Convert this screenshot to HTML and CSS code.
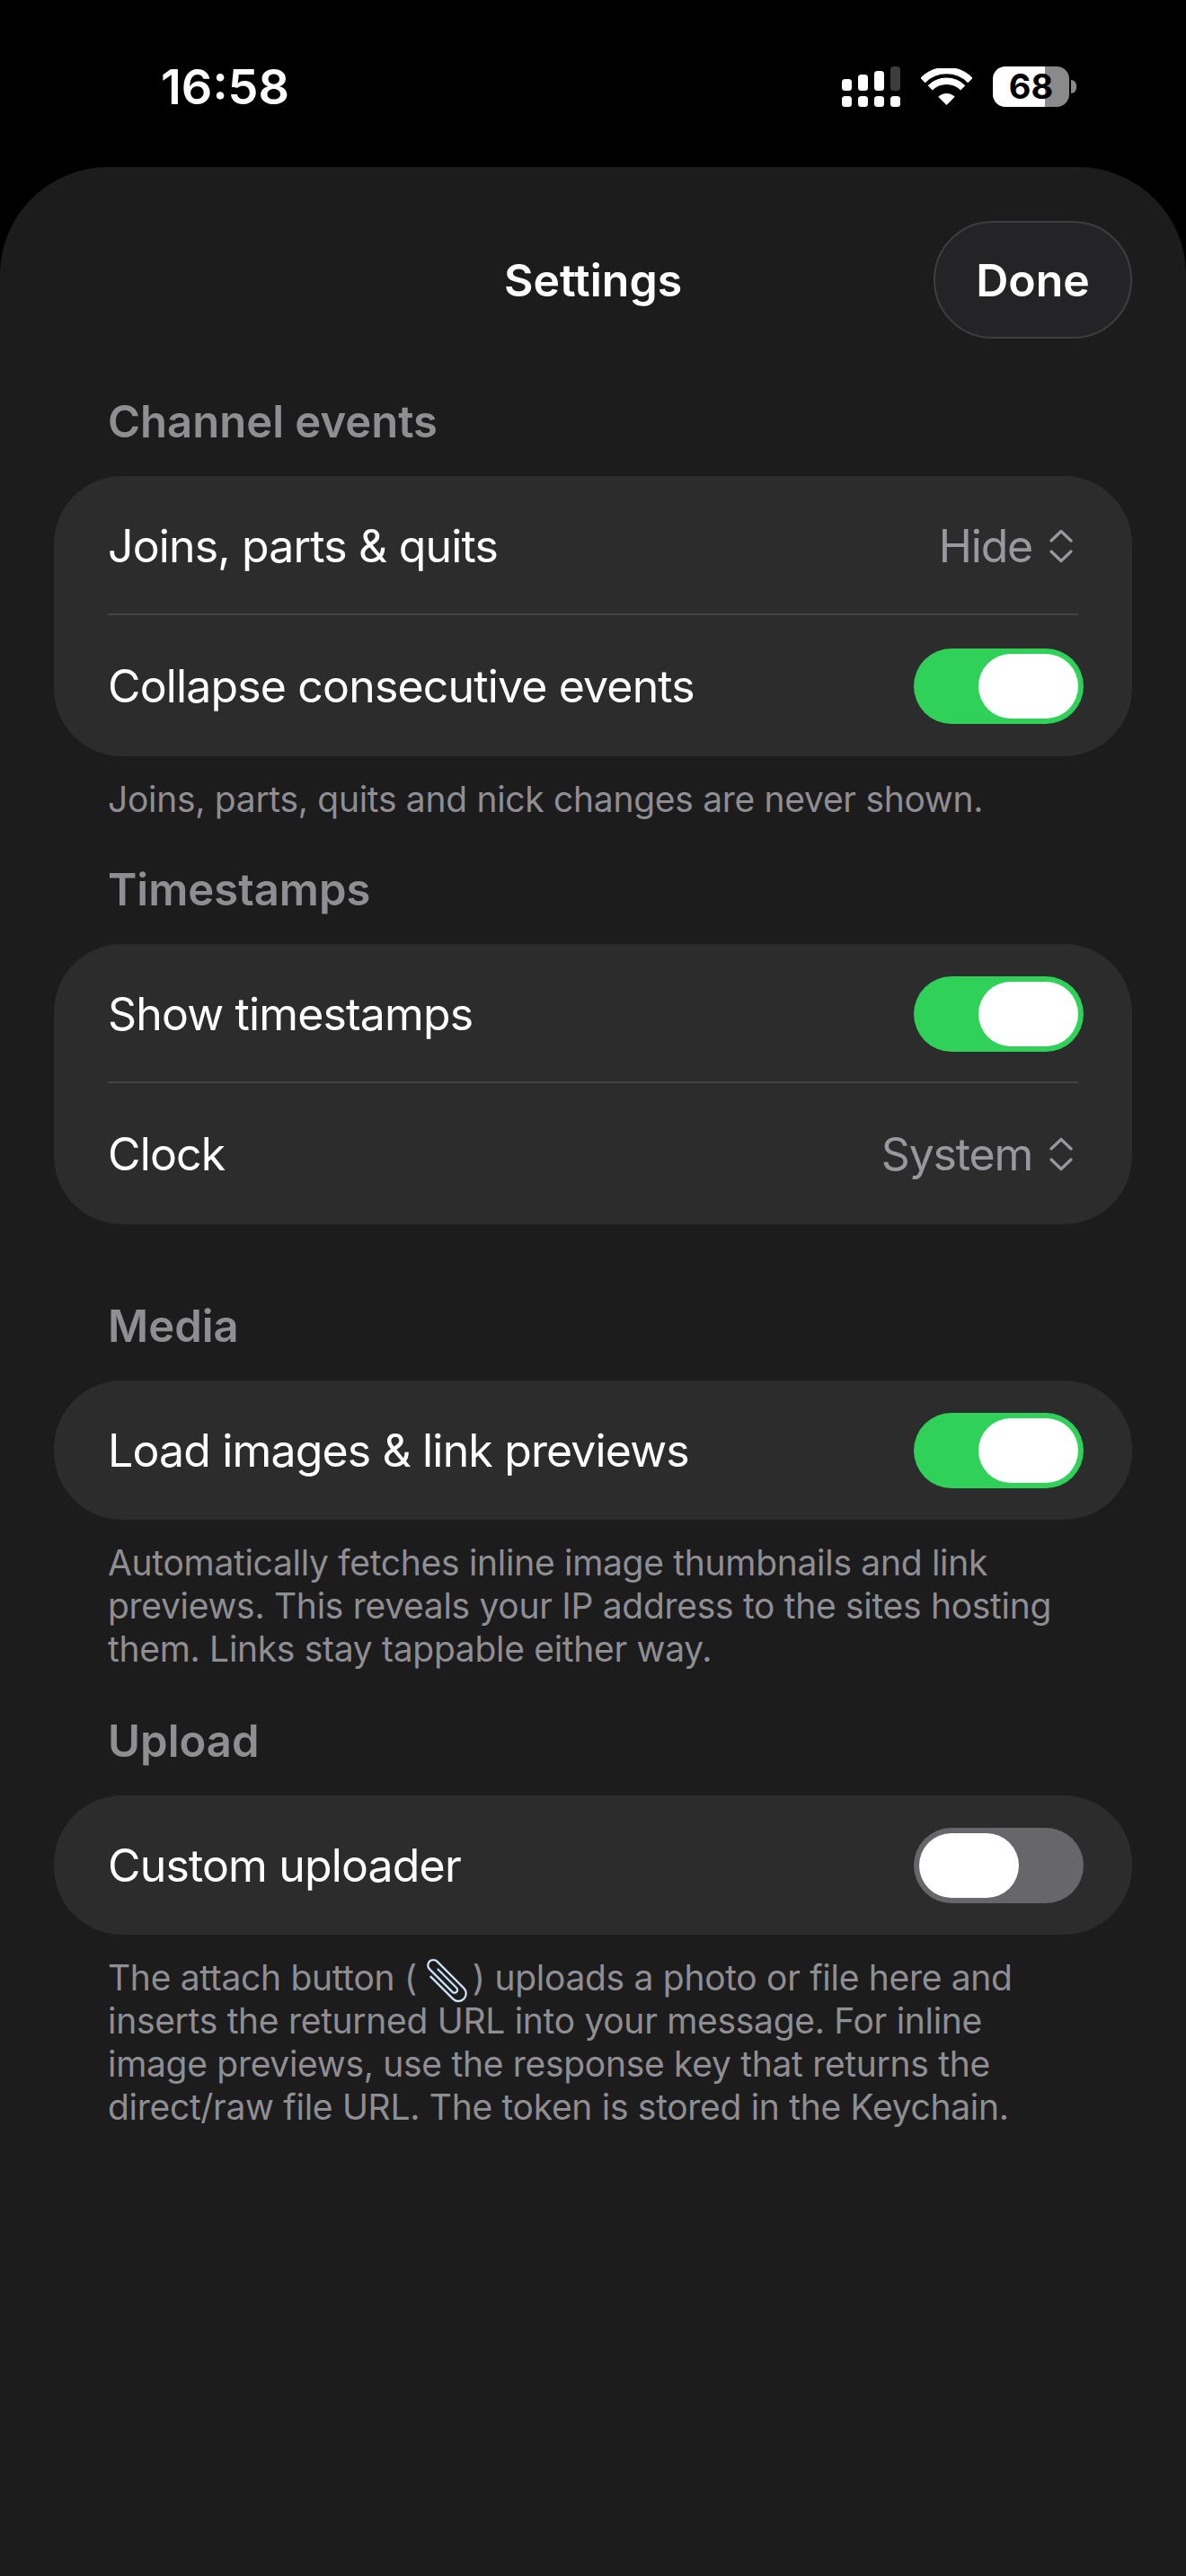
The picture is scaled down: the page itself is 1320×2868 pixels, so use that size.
FILE: index.html
```html
<!DOCTYPE html>
<html lang="en">
<head>
    <meta charset="UTF-8">
    <meta name="viewport" content="width=device-width, initial-scale=1.0">
    <title>Settings</title>
    <link rel="stylesheet" href="styles.css">
</head>
<body>

    <!-- Status bar -->
    <div class="status-bar">
        <span class="clock">16:58</span>
        <div class="status-icons">
            <svg class="signal" width="65" height="45" viewBox="0 0 65 45">
                <rect x="0" y="14" width="11" height="13" rx="3.5" fill="#fff"/>
                <rect x="18" y="9" width="11" height="18" rx="3.5" fill="#fff"/>
                <rect x="36" y="5" width="11" height="22" rx="3.5" fill="#fff"/>
                <rect x="54" y="0" width="11" height="27" rx="3.5" fill="#3c3c3c"/>
                <rect x="0" y="33" width="11" height="12" rx="3.5" fill="#fff"/>
                <rect x="18" y="33" width="11" height="12" rx="3.5" fill="#fff"/>
                <rect x="36" y="33" width="11" height="12" rx="3.5" fill="#fff"/>
                <rect x="54" y="33" width="11" height="12" rx="3.5" fill="#fff"/>
            </svg>
            <svg class="wifi" width="57" height="42" viewBox="0 0 57 42">
                <path d="M2 13.5 A37.5 37.5 0 0 1 55 13.5" fill="none" stroke="#fff" stroke-width="7.6"/>
                <path d="M10.3 21.8 A25.7 25.7 0 0 1 46.7 21.8" fill="none" stroke="#fff" stroke-width="7.4"/>
                <path d="M28.5 41 L19.3 31.8 A13 13 0 0 1 37.7 31.8 Z" fill="#fff"/>
            </svg>
            <div class="battery">
                <div class="battery-body">68</div>
                <div class="battery-nub"></div>
            </div>
        </div>
    </div>

    <div class="sheet">
        <div class="nav">
            <span></span>
            <h1 class="nav-title">Settings</h1>
            <button class="done-button">Done</button>
        </div>

        <!-- Channel events -->
        <h2 class="section-title first">Channel events</h2>
        <div class="card">
            <div class="row">
                <span>Joins, parts &amp; quits</span>
                <span class="value">Hide
                    <svg class="updown" width="26" height="38" viewBox="0 0 26 38"><path d="M2 13 L13 2.5 L24 13 M2 25 L13 35.5 L24 25" fill="none" stroke="#98989e" stroke-width="3.2" stroke-linecap="round" stroke-linejoin="round"/></svg>
                </span>
            </div>
            <div class="divider"></div>
            <div class="row">
                <span>Collapse consecutive events</span>
                <div class="toggle on"><div class="knob"></div></div>
            </div>
        </div>
        <p class="note">Joins, parts, quits and nick changes are never shown.</p>

        <!-- Timestamps -->
        <h2 class="section-title">Timestamps</h2>
        <div class="card">
            <div class="row">
                <span>Show timestamps</span>
                <div class="toggle on"><div class="knob"></div></div>
            </div>
            <div class="divider"></div>
            <div class="row">
                <span>Clock</span>
                <span class="value">System
                    <svg class="updown" width="26" height="38" viewBox="0 0 26 38"><path d="M2 13 L13 2.5 L24 13 M2 25 L13 35.5 L24 25" fill="none" stroke="#98989e" stroke-width="3.2" stroke-linecap="round" stroke-linejoin="round"/></svg>
                </span>
            </div>
        </div>

        <!-- Media -->
        <h2 class="section-title after-card">Media</h2>
        <div class="card">
            <div class="row">
                <span>Load images &amp; link previews</span>
                <div class="toggle on"><div class="knob"></div></div>
            </div>
        </div>
        <p class="note">Automatically fetches inline image thumbnails and link<br>previews. This reveals your IP address to the sites hosting<br>them. Links stay tappable either way.</p>

        <!-- Upload -->
        <h2 class="section-title after-long">Upload</h2>
        <div class="card">
            <div class="row">
                <span>Custom uploader</span>
                <div class="toggle"><div class="knob"></div></div>
            </div>
        </div>
        <p class="note">The attach button (<svg class="clip" width="50" height="50" viewBox="0 0 50 50"><g transform="rotate(-45 25 25)" fill="none" stroke-linecap="round"><path d="M17 11 V46 A8.5 8.5 0 0 0 34 46 V4 A6 6 0 0 0 22 4 V40 A3.2 3.2 0 0 0 28.5 40 V11" stroke="#7f9fc4" stroke-width="2.6"/><path d="M17 11 V46 A8.5 8.5 0 0 0 34 46 V4 A6 6 0 0 0 22 4 V40 A3.2 3.2 0 0 0 28.5 40 V11" stroke="#eef2f6" stroke-width="1.3"/></g></svg>) uploads a photo or file here and<br>inserts the returned URL into your message. For inline<br>image previews, use the response key that returns the<br>direct/raw file URL. The token is stored in the Keychain.</p>
    </div>

</body>
</html>
```

FILE: styles.css
```css
* {
    box-sizing: border-box;
}

html, body {
    margin: 0;
    background-color: #000;
}

body {
    width: 1320px;
    height: 2868px;
    overflow: hidden;
    font-family: "Inter", "Liberation Sans", sans-serif;
    color: #fff;
}

.status-bar {
    height: 186px;
    padding: 0 122px 0 179px;
    display: flex;
    justify-content: space-between;
    align-items: flex-start;
}

.clock {
    margin-top: 64px;
    font-size: 54px;
    line-height: 66px;
    font-weight: 600;
}

.status-icons {
    margin-top: 74px;
    display: flex;
    align-items: flex-start;
}

.wifi {
    margin: 2px 0 0 23px;
}

.battery {
    margin-left: 23px;
    display: flex;
    align-items: center;
}

.battery-body {
    width: 85px;
    height: 45px;
    border-radius: 14px;
    background: linear-gradient(to right, #fff 58px, #8a8a8a 58px);
    color: #000;
    font-size: 38px;
    line-height: 45px;
    font-weight: 700;
    text-align: center;
}

.battery-nub {
    width: 6px;
    height: 15px;
    margin-left: 2px;
    border-radius: 0 8px 8px 0;
    background-color: #8a8a8a;
}

.sheet {
    height: 2682px;
    padding-top: 60px;
    border-radius: 120px 120px 0 0;
    background-color: #1c1c1d;
}

.nav {
    height: 131px;
    margin-right: 60px;
    display: grid;
    grid-template-columns: 1fr auto 1fr;
    align-items: center;
}

.nav-title {
    margin: 0 0 0 60px;
    font-size: 50px;
    font-weight: 600;
}

.done-button {
    justify-self: end;
    width: 221px;
    height: 131px;
    padding: 0;
    border: 2px solid #3f3f43;
    border-radius: 66px;
    background-color: #242427;
    color: #fff;
    font-family: inherit;
    font-size: 50px;
    font-weight: 600;
}

.section-title {
    margin: 47px 0 30px;
    padding-left: 120px;
    font-size: 49px;
    line-height: 60px;
    font-weight: 600;
    color: #8e8e93;
}

.section-title.first {
    margin-top: 63px;
}

.section-title.after-card {
    margin-top: 84px;
}

.section-title.after-long {
    margin-top: 49px;
}

.card {
    margin: 0 60px;
    border-radius: 76px;
    background-color: #2c2c2d;
}

.row {
    height: 155px;
    padding: 0 54px 0 60px;
    display: flex;
    justify-content: space-between;
    align-items: center;
    font-size: 50px;
    letter-spacing: -0.85px;
}

.divider {
    height: 2px;
    margin: -2px 60px 0;
    background-color: #444446;
}

.divider + .row {
    height: 157px;
}

.value {
    margin-right: 12px;
    display: flex;
    align-items: center;
    gap: 19px;
    color: #98989e;
    letter-spacing: -1.2px;
}

.toggle {
    width: 189px;
    height: 84px;
    padding: 6px;
    display: flex;
    border-radius: 42px;
    background-color: #66666b;
}

.toggle.on {
    justify-content: flex-end;
    background-color: #30d158;
}

.knob {
    width: 111px;
    height: 72px;
    border-radius: 36px;
    background-color: #fff;
}

.note {
    margin: 24px 0 0;
    padding-left: 120px;
    font-size: 39px;
    line-height: 48px;
    letter-spacing: -0.3px;
    color: #8e8e93;
}

.clip {
    margin: -12px 6px;
    vertical-align: middle;
}
```
